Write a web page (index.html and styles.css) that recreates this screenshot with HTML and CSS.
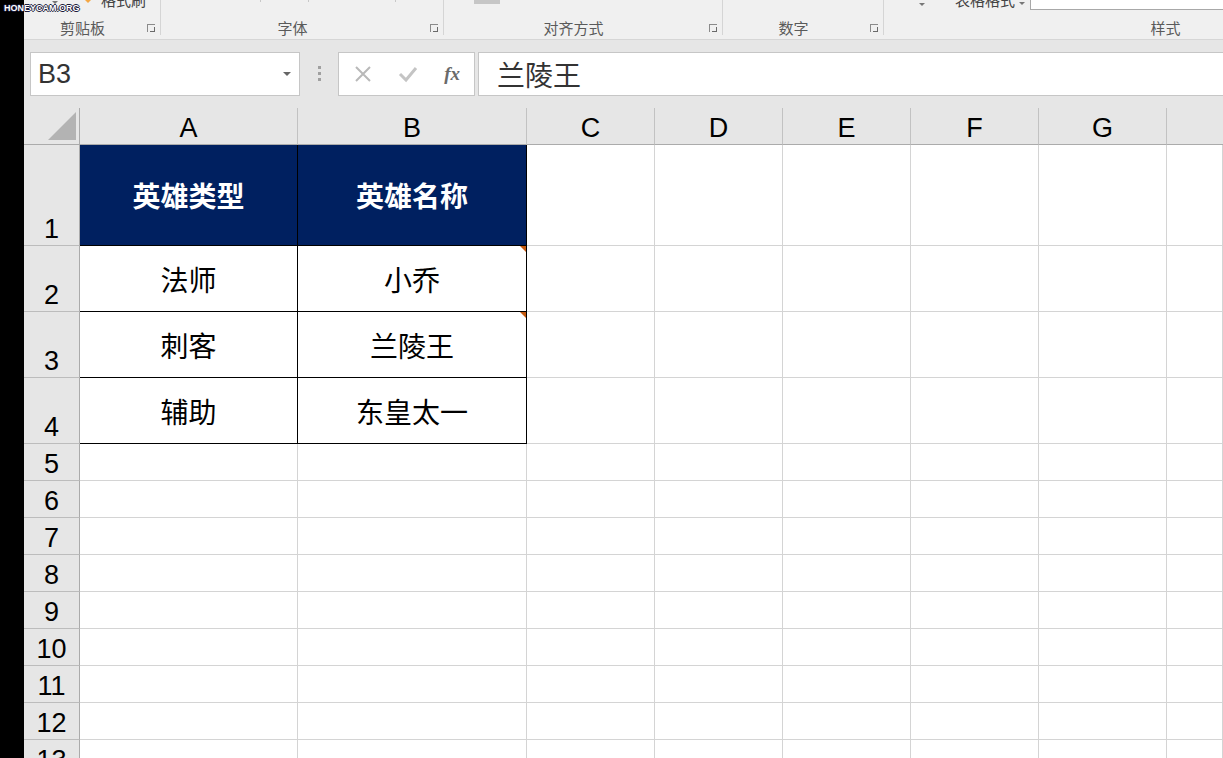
FILE: index.html
```html
<!DOCTYPE html>
<html lang="zh-CN">

<head>
    <meta charset="UTF-8">
    <meta name="viewport" content="width=device-width, initial-scale=1.0">
    <title>Excel - 英雄</title>
    <link rel="stylesheet" href="styles.css">
</head>

<body>
    <div class="window">
        <div class="strip"></div>
        <div class="excel">
            <!-- ribbon, cut off at the top -->
            <div class="ribbon">
                <div class="group g-clip">
                    <div class="group-top">
                        <span class="mini-arrow clip-arrow"></span>
                        <svg class="brush" width="12" height="8" viewBox="0 0 12 8">
                            <path d="M1 -2 L6 3 L11 -2 L6 -7 Z" fill="#f4a744" />
                        </svg>
                        <span class="clip-text">格式刷</span>
                    </div>
                    <div class="label-row"><span class="label">剪贴板</span><span class="launcher"></span></div>
                </div>
                <div class="group g-font">
                    <div class="group-top">
                        <span class="tick t1"></span><span class="tick t2"></span><span class="tick t3"></span>
                    </div>
                    <div class="label-row"><span class="label">字体</span><span class="launcher"></span></div>
                </div>
                <div class="group g-align">
                    <div class="group-top">
                        <span class="align-block"></span>
                    </div>
                    <div class="label-row"><span class="label">对齐方式</span><span class="launcher"></span></div>
                </div>
                <div class="group g-number">
                    <div class="group-top"></div>
                    <div class="label-row"><span class="label">数字</span><span class="launcher"></span></div>
                </div>
                <div class="group g-style">
                    <div class="group-top">
                        <span class="mini-arrow style-arrow"></span>
                        <span class="clip-text table-fmt">表格格式</span>
                        <span class="mini-arrow fmt-arrow"></span>
                        <span class="style-box"></span>
                    </div>
                    <div class="label-row"><span class="label">样式</span></div>
                </div>
            </div>

            <!-- name box + formula bar -->
            <div class="formula-bar">
                <div class="name-box">
                    <span>B3</span>
                    <span class="name-drop"></span>
                </div>
                <div class="grip"><i></i><i></i><i></i></div>
                <div class="fx-buttons">
                    <svg width="18" height="18" viewBox="0 0 18 18">
                        <path d="M2 2 L16 16 M16 2 L2 16" stroke="#b9b9b9" stroke-width="2" />
                    </svg>
                    <svg width="20" height="18" viewBox="0 0 20 18">
                        <path d="M2 9 L8 15 L18 3" stroke="#c4c4c4" stroke-width="3" fill="none" />
                    </svg>
                    <span class="fx">fx</span>
                </div>
                <div class="formula-input">兰陵王</div>
            </div>

            <!-- worksheet -->
            <div class="sheet" id="sheet">
                <div class="corner">
                    <svg width="30" height="30" viewBox="0 0 30 30">
                        <polygon points="29,1 29,29 1,29" fill="#b3b3b3" />
                    </svg>
                </div>
                <div class="col-head">A</div>
                <div class="col-head">B</div>
                <div class="col-head">C</div>
                <div class="col-head">D</div>
                <div class="col-head">E</div>
                <div class="col-head">F</div>
                <div class="col-head">G</div>
                <div class="col-head last"></div>

                <div class="row-head">1</div>
                <div class="cell boxed title">英雄类型</div>
                <div class="cell boxed title">英雄名称</div>
                <div class="cell"></div><div class="cell"></div><div class="cell"></div>
                <div class="cell"></div><div class="cell"></div><div class="cell"></div>

                <div class="row-head">2</div>
                <div class="cell boxed">法师</div>
                <div class="cell boxed note">小乔</div>
                <div class="cell"></div><div class="cell"></div><div class="cell"></div>
                <div class="cell"></div><div class="cell"></div><div class="cell"></div>

                <div class="row-head">3</div>
                <div class="cell boxed">刺客</div>
                <div class="cell boxed note">兰陵王</div>
                <div class="cell"></div><div class="cell"></div><div class="cell"></div>
                <div class="cell"></div><div class="cell"></div><div class="cell"></div>

                <div class="row-head">4</div>
                <div class="cell boxed">辅助</div>
                <div class="cell boxed">东皇太一</div>
                <div class="cell"></div><div class="cell"></div><div class="cell"></div>
                <div class="cell"></div><div class="cell"></div><div class="cell"></div>
            </div>
        </div>
        <div class="watermark">HONEYCAM.ORG</div>
    </div>

    <script>
        const sheet = document.getElementById('sheet');

        // empty rows below the table
        for (let row = 5; row <= 13; row++) {
            let html = `<div class="row-head">${row}</div>`;
            for (let col = 0; col < 8; col++) {
                html += `<div class="cell"></div>`;
            }
            sheet.insertAdjacentHTML('beforeend', html);
        }
    </script>
</body>

</html>
```

FILE: styles.css
```css
* {
    box-sizing: border-box;
}

body {
    margin: 0;
    background: #000;
    font-family: "Liberation Sans", "Noto Sans CJK SC", sans-serif;
    overflow: hidden;
}

.window {
    position: relative;
    display: flex;
    width: 1223px;
    height: 758px;
    overflow: hidden;
}

.strip {
    flex: none;
    width: 24px;
    background: #000;
}

.excel {
    flex: 1;
    min-width: 0;
    display: flex;
    flex-direction: column;
    background: #fff;
}

/* ---------- ribbon ---------- */

.ribbon {
    flex: none;
    display: flex;
    height: 40px;
    background: #f0f0f0;
    border-bottom: 1px solid #d6d6d6;
}

.group {
    display: flex;
    flex-direction: column;
    height: 35px;
    border-right: 1px solid #d5d5d5;
}

.g-clip { width: 137px; }
.g-font { width: 283px; }
.g-align { width: 279px; }
.g-number { width: 161px; }
.g-style { flex: 1; border-right: none; }

.group-top {
    display: flex;
    align-items: flex-start;
    height: 17px;
    overflow: hidden;
}

.label-row {
    display: flex;
    align-items: center;
    height: 20px;
    margin-bottom: -3px;
}

.label {
    flex: 1;
    text-align: center;
    font-family: "Noto Sans CJK SC", sans-serif;
    font-size: 15px;
    color: #5a5a5a;
}

.launcher {
    position: relative;
    width: 8px;
    height: 8px;
    margin: 2px 5px 0 6px;
    border: 1px solid #8a8a8a;
    border-width: 1px 0 0 1px;
}

.launcher::after {
    content: "";
    position: absolute;
    right: 0;
    bottom: 0;
    width: 4px;
    height: 4px;
    border-right: 1px solid #6a6a6a;
    border-bottom: 1px solid #6a6a6a;
}

.g-style .label {
    padding-left: 224px;
}

.mini-arrow {
    width: 0;
    height: 0;
    border-left: 3px solid transparent;
    border-right: 3px solid transparent;
    border-top: 3px solid #777;
}

.clip-arrow {
    margin: 1px 0 0 28px;
}

.brush {
    margin-left: 24px;
}

.clip-text {
    font-family: "Noto Sans CJK SC", sans-serif;
    font-size: 15px;
    line-height: 16px;
    color: #444;
    margin-top: -8px;
}

.g-clip .clip-text {
    margin-left: 7px;
}

.tick {
    width: 1px;
    height: 2px;
    background: #c8c8c8;
}

.t1 { margin-left: 99px; }
.t2 { margin-left: 47px; }
.t3 { margin-left: 86px; }

.align-block {
    width: 26px;
    height: 4px;
    margin-left: 30px;
    background: #c6c6c6;
}

.style-arrow {
    margin: 3px 0 0 35px;
}

.table-fmt {
    margin-left: 30px;
}

.fmt-arrow {
    margin: 2px 0 0 4px;
}

.style-box {
    flex: 1;
    height: 10px;
    margin-left: 5px;
    background: #fff;
    border-left: 1px solid #a8a8a8;
    border-bottom: 1px solid #a8a8a8;
}

/* ---------- formula bar ---------- */

.formula-bar {
    flex: none;
    display: flex;
    align-items: flex-start;
    height: 68px;
    padding-top: 12px;
    background: #e6e6e6;
}

.name-box,
.fx-buttons,
.formula-input {
    height: 44px;
    background: #fff;
    border: 1px solid #c6c6c6;
}

.name-box {
    display: flex;
    align-items: center;
    justify-content: space-between;
    width: 270px;
    margin-left: 6px;
    padding: 0 8px 0 7px;
    font-size: 27px;
    color: #333;
}

.name-drop {
    width: 0;
    height: 0;
    border-left: 4px solid transparent;
    border-right: 4px solid transparent;
    border-top: 4px solid #666;
}

.grip {
    display: flex;
    flex-direction: column;
    align-items: center;
    gap: 3px;
    width: 38px;
    padding-top: 14px;
}

.grip i {
    width: 3px;
    height: 3px;
    background: #a0a0a0;
}

.fx-buttons {
    display: flex;
    align-items: center;
    justify-content: space-between;
    width: 137px;
    padding: 0 14px 0 15px;
}

.fx {
    font-family: "Liberation Serif", serif;
    font-style: italic;
    font-weight: bold;
    font-size: 19px;
    color: #6a6a6a;
}

.formula-input {
    flex: 1;
    margin-left: 3px;
    padding-left: 18px;
    border-right: none;
    font-family: "Noto Sans CJK SC", sans-serif;
    font-size: 28px;
    line-height: 42px;
    color: #333;
}

/* ---------- worksheet ---------- */

.sheet {
    flex: 1;
    display: grid;
    grid-template-columns: 56px 218px 229px repeat(5, 128px) 1fr;
    grid-template-rows: 37px 101px 66px 66px 66px;
    grid-auto-rows: 37px;
    background: #fff;
}

.corner {
    display: flex;
    align-items: flex-end;
    justify-content: flex-end;
    padding: 0 2px 3px 0;
    background: #e6e6e6;
    border-right: 1px solid #ababab;
    border-bottom: 1px solid #ababab;
}

.col-head {
    display: flex;
    align-items: center;
    justify-content: center;
    padding-top: 4px;
    background: #e6e6e6;
    border-right: 1px solid #c2c2c2;
    border-bottom: 1px solid #ababab;
    font-size: 27px;
    line-height: 1;
    color: #000;
}

.col-head.last {
    border-right: none;
}

.row-head {
    display: flex;
    align-items: flex-end;
    justify-content: center;
    padding-bottom: 2px;
    background: #e6e6e6;
    border-right: 1px solid #ababab;
    border-bottom: 1px solid #bcbcbc;
    font-size: 27px;
    line-height: 1;
    color: #000;
}

.cell {
    display: flex;
    align-items: center;
    justify-content: center;
    border-right: 1px solid #d4d4d4;
    border-bottom: 1px solid #d4d4d4;
    font-family: "Noto Sans CJK SC", sans-serif;
    font-size: 28px;
    color: #000;
}

.cell.boxed {
    border-right-color: #000;
    border-bottom-color: #000;
}

.cell.title {
    background: #002060;
    color: #fff;
    font-weight: bold;
}

.cell.note {
    position: relative;
}

.cell.note::after {
    content: "";
    position: absolute;
    top: 0;
    right: 0;
    border-top: 6px solid #c55a11;
    border-left: 6px solid transparent;
}

/* ---------- recorder watermark ---------- */

.watermark {
    position: absolute;
    left: 4px;
    top: 3px;
    font-family: "Liberation Sans", sans-serif;
    font-size: 9px;
    font-weight: bold;
    color: #fff;
    text-shadow: 1px 0 #1a1a3a, -1px 0 #1a1a3a, 0 1px #1a1a3a, 0 -1px #1a1a3a;
}
```
